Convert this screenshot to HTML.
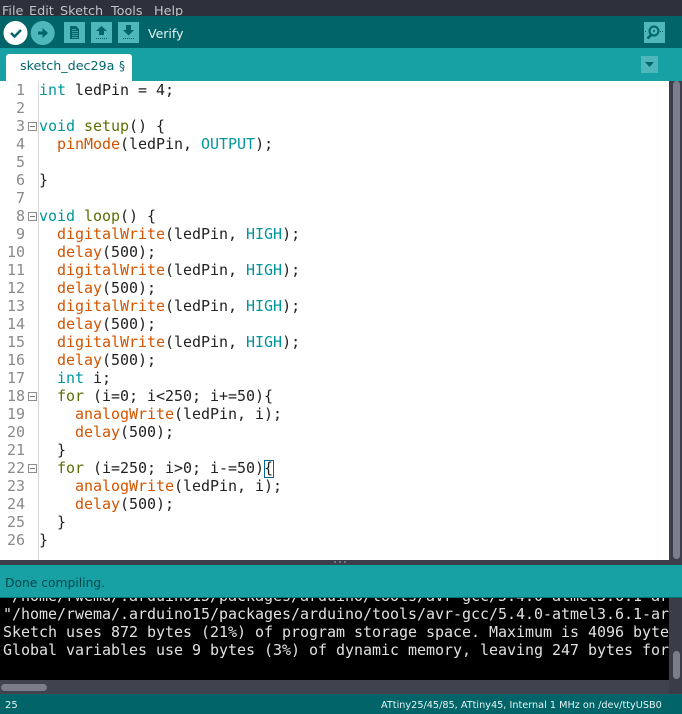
<!DOCTYPE html>
<html><head><meta charset="utf-8"><style>
html,body{margin:0;padding:0;width:682px;height:714px;overflow:hidden;background:#3a3f4b}
div{position:absolute;box-sizing:border-box}
.m{font-family:"DejaVu Sans Mono",monospace;font-size:15px;line-height:18px;white-space:pre;letter-spacing:-.03px}
.s{font-family:"DejaVu Sans",sans-serif;white-space:pre}
.k{color:#00979c}.f{color:#d35400}.g{color:#5e6d03}
#n div{left:0;width:25px;text-align:right;color:#8a8a8a}
.fold{left:28px;width:9px;height:9px;border:1px solid #8c8c8c;background:#fff}
.fold:after{content:"";position:absolute;left:1px;top:3px;width:5px;height:1px;background:#777}
.mn{top:3px;font-size:12.800px;line-height:18px;color:#c0c2c8}
</style></head><body>
<div style="left:0;top:0;width:682px;height:16px;background:#2e303c;overflow:hidden">
<div class="s mn" style="left:2px">File</div>
<div class="s mn" style="left:29px">Edit</div>
<div class="s mn" style="left:60px">Sketch</div>
<div class="s mn" style="left:111px">Tools</div>
<div class="s mn" style="left:154px">Help</div>
</div>
<div style="left:0;top:16px;width:682px;height:32px;background:#006468"></div>
<svg style="position:absolute;left:0;top:16px" width="682" height="32">
<circle cx="15.500" cy="17" r="12" fill="#fff"/>
<path d="M11 17l3.500 3.500 6.500-6.500" fill="none" stroke="#006468" stroke-width="2.400"/>
<circle cx="42.700" cy="17" r="12" fill="#4db7bb"/>
<path d="M38 15.500h4.500v-3.500l5.500 5-5.500 5v-3.500h-4.500z" fill="#006468"/>
<rect x="64" y="6" width="21" height="21" fill="#4db7bb"/>
<path d="M70 10h6l3 3v10h-9z" fill="#006468"/>
<path d="M72 13.500h4M72 15.500h6M72 17.500h6M72 19.500h6M72 21.500h6" stroke="#4db7bb" stroke-width=".8"/>
<rect x="91" y="6" width="21" height="21" fill="#4db7bb"/>
<path d="M101.500 10l5.500 5h-3v4h-5v-4h-3z" fill="#006468"/>
<path d="M96 22.500h11" stroke="#006468" stroke-dasharray="1 1"/>
<rect x="118" y="6" width="21" height="21" fill="#4db7bb"/>
<path d="M126 9h5v5h3l-5.500 5.500-5.500-5.500h3z" fill="#006468"/>
<path d="M123 22.500h11" stroke="#006468" stroke-dasharray="1 1"/>
<rect x="644" y="6" width="21" height="21" fill="#4db7bb"/>
<circle cx="654" cy="15" r="4.500" fill="none" stroke="#006468" stroke-width="2"/>
<circle cx="654" cy="15" r="1" fill="#006468"/>
<path d="M651 19l-3.500 3.500" stroke="#006468" stroke-width="2.500"/>
<path d="M660 15.500h3M645 15.500h2" stroke="#006468" stroke-dasharray="1 1"/>
</svg>
<div class="s" style="left:148px;top:25px;font-size:12.500px;line-height:18px;color:#e6f3f3">Verify</div>
<div style="left:0;top:48px;width:682px;height:33px;background:#17a1a5"></div>
<div style="left:6px;top:54px;width:126px;height:27px;background:#fff;border-radius:3px 3px 0 0"></div>
<div class="s" style="left:20px;top:57px;font-size:12.700px;line-height:18px;color:#00666a">sketch_dec29a</div>
<div class="s" style="left:119px;top:57px;font-size:12px;line-height:18px;color:#00666a">§</div>
<svg style="position:absolute;left:641px;top:56px" width="17" height="17"><rect width="17" height="17" fill="#4db7bb"/><path d="M4 6h9l-4.500 5z" fill="#006468"/></svg>
<div style="left:0;top:81px;width:669px;height:479px;background:#fff"></div>
<div style="left:38px;top:81px;width:1px;height:479px;background:#d8d8d8"></div>
<div id="n" class="m" style="left:0;top:81px;width:38px;height:479px">
<div style="top:0">1</div><div style="top:18px">2</div><div style="top:36px">3</div><div style="top:54px">4</div><div style="top:72px">5</div><div style="top:90px">6</div><div style="top:108px">7</div><div style="top:126px">8</div><div style="top:144px">9</div><div style="top:162px">10</div><div style="top:180px">11</div><div style="top:198px">12</div><div style="top:216px">13</div><div style="top:234px">14</div><div style="top:252px">15</div><div style="top:270px">16</div><div style="top:288px">17</div><div style="top:306px">18</div><div style="top:324px">19</div><div style="top:342px">20</div><div style="top:360px">21</div><div style="top:378px">22</div><div style="top:396px">23</div><div style="top:414px">24</div><div style="top:432px">25</div><div style="top:450px">26</div>
</div>
<div class="fold" style="top:122px"></div><div class="fold" style="top:212px"></div><div class="fold" style="top:392px"></div><div class="fold" style="top:464px"></div>
<div class="m" style="left:39px;top:81px;color:#222"><span class="k">int</span> ledPin = 4;

<span class="k">void</span> <span class="g">setup</span>() {
  <span class="f">pinMode</span>(ledPin, <span class="k">OUTPUT</span>);

}

<span class="k">void</span> <span class="g">loop</span>() {
  <span class="f">digitalWrite</span>(ledPin, <span class="k">HIGH</span>);
  <span class="f">delay</span>(500);
  <span class="f">digitalWrite</span>(ledPin, <span class="k">HIGH</span>);
  <span class="f">delay</span>(500);
  <span class="f">digitalWrite</span>(ledPin, <span class="k">HIGH</span>);
  <span class="f">delay</span>(500);
  <span class="f">digitalWrite</span>(ledPin, <span class="k">HIGH</span>);
  <span class="f">delay</span>(500);
  <span class="k">int</span> i;
  <span class="g">for</span> (i=0; i&lt;250; i+=50){
    <span class="f">analogWrite</span>(ledPin, i);
    <span class="f">delay</span>(500);
  }
  <span class="g">for</span> (i=250; i&gt;0; i-=50){
    <span class="f">analogWrite</span>(ledPin, i);
    <span class="f">delay</span>(500);
  }
}</div>
<div style="left:264px;top:460px;width:10px;height:18px;border:1px solid #006699"></div>
<div style="left:669px;top:81px;width:13px;height:479px;background:#3a3f4b"></div>
<div style="left:673px;top:81px;width:7px;height:478px;background:#7b7e8a;border-radius:4px"></div>
<div style="left:0;top:560px;width:682px;height:5px;background:#3a3f4b"></div>
<div style="left:334px;top:561px;width:12px;height:2px;background:repeating-linear-gradient(90deg,#70747f 0 2px,transparent 2px 5px)"></div>
<div style="left:0;top:598px;width:669px;height:82px;background:#000;overflow:hidden">
<div class="m" style="left:3px;top:-11px;color:#e0e0e0">"/home/rwema/.arduino15/packages/arduino/tools/avr-gcc/5.4.0-atmel3.6.1-ar
"/home/rwema/.arduino15/packages/arduino/tools/avr-gcc/5.4.0-atmel3.6.1-ar
Sketch uses 872 bytes (21%) of program storage space. Maximum is 4096 byte
Global variables use 9 bytes (3%) of dynamic memory, leaving 247 bytes for</div>
</div>
<div style="left:0;top:565px;width:682px;height:33px;background:#17a1a5;border-bottom:1px solid #0b6f72"></div>
<div class="s" style="left:5px;top:574px;font-size:12.300px;line-height:18px;color:#00474a">Done compiling.</div>
<div style="left:669px;top:598px;width:13px;height:96px;background:#3a3d48"></div>
<div style="left:673px;top:651px;width:7px;height:28px;background:#7b7e8a;border-radius:4px"></div>
<div style="left:0;top:680px;width:669px;height:14px;background:#3f434e"></div>
<div style="left:1px;top:684px;width:46px;height:7px;background:#7b7e8a;border-radius:4px"></div>
<div style="left:0;top:694px;width:682px;height:20px;background:#006468"></div>
<div class="s" style="left:5px;top:698px;font-size:10px;line-height:15px;color:#e8f4f4">25</div>
<div class="s" style="left:381px;top:698px;font-size:9.700px;line-height:15px;color:#e8f4f4">ATtiny25/45/85, ATtiny45, Internal 1 MHz on /dev/ttyUSB0</div>
</body></html>
